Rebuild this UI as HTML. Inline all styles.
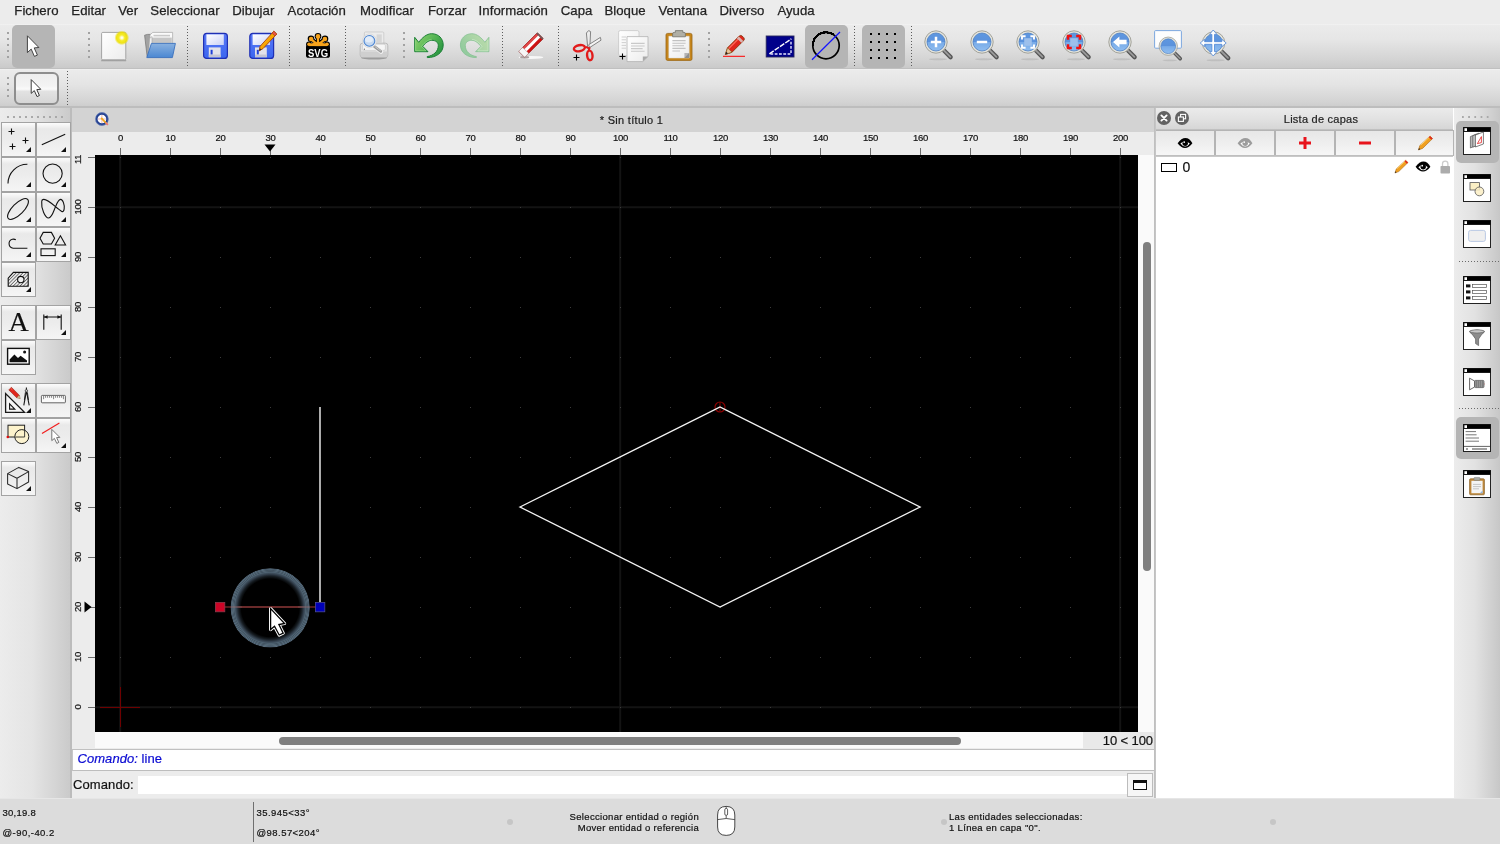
<!DOCTYPE html>
<html><head><meta charset="utf-8">
<style>
*{box-sizing:border-box;margin:0;padding:0}
html,body{width:1500px;height:844px;overflow:hidden;background:#ececec;font-family:"Liberation Sans",sans-serif;color:#1d1d1d;-webkit-text-stroke:0.2px}
.a{position:absolute}
svg{position:absolute;overflow:visible}
#menubar{left:0;top:0;width:1500px;height:24px;background:#ececec}
#menubar span{position:absolute;top:2px;font-size:13.2px;line-height:18px;color:#232323;white-space:nowrap;letter-spacing:0.04px;-webkit-text-stroke:0.25px #232323}
#tb1{left:0;top:24px;width:1500px;height:45px;background:linear-gradient(#f3f3f3 0,#ebebeb 1.5px,#e6e6e6 35%,#d4d4d4 80%,#cacaca 100%);border-bottom:1px solid #c0c0c0}
#tb2{left:0;top:69px;width:1500px;height:39px;background:linear-gradient(#f2f2f2 0,#ebebeb 1.5px,#e4e4e4 40%,#d3d3d3 85%,#cbcbcb 100%)}
#tb2b{left:0;top:104px;width:1500px;height:4px;background:linear-gradient(#cfcfcf,#b9b9b9 50%,#bdbdbd)}
.sep{position:absolute;top:2px;height:40px;width:1px;background-image:linear-gradient(#5c5c5c 1px,transparent 1px);background-size:1px 3px}
.grip{position:absolute;width:2px;background-image:linear-gradient(#a2a2a2 2px,transparent 2px);background-size:2px 6px}
.act{position:absolute;background:#b5b5b5;border-radius:5px}
#left{left:0;top:108px;width:72px;height:690px;background:linear-gradient(90deg,#ececec 0%,#e4e4e4 45%,#c9c9c9 100%)}
#tabbar{left:72px;top:108px;width:1083px;height:24px;background:#d3d3d3}
#hr{left:72px;top:132px;width:1083px;height:23px;background:#ececec;overflow:hidden}
#vr{left:72px;top:155px;width:23px;height:593px;background:#ececec;overflow:hidden}
#cv{left:95px;top:155px;width:1043px;height:577px;background:#000;overflow:hidden}
#vs{left:1138px;top:155px;width:17px;height:577px;background:#fafafa}
#hs{left:95px;top:732px;width:1060px;height:16px;background:#fafafa}
#status{left:0;top:798px;width:1500px;height:46px;background:#dcdcdc}
#right{left:1155px;top:108px;width:299px;height:690px;background:#fff}
#rtb{left:1454px;top:108px;width:46px;height:690px;background:linear-gradient(90deg,#ececec 0%,#e2e2e2 45%,#c7c7c7 100%)}
.rl{position:absolute;font-size:9.5px;letter-spacing:-0.35px;color:#111;line-height:10px;white-space:nowrap}
.cb{position:absolute;width:35px;height:35px;border:1px solid #a3a3a3;background:linear-gradient(#fbfbfb 0,#f6f6f6 6%,#e9e9e9 18%,#ececec 50%,#f5f5f5 100%)}
.cb:after{content:"";position:absolute;right:4.2px;bottom:4.2px;border-left:5px solid transparent;border-bottom:5px solid #111}
.cb.n:after{display:none}
.st{position:absolute;font-size:9.5px;line-height:11px;color:#111;white-space:nowrap;letter-spacing:0.25px}
</style></head><body><div id="root" style="position:absolute;left:0;top:0;width:1500px;height:844px;will-change:transform">
<div id="menubar" class="a">
<span style="left:14.3px">Fichero</span><span style="left:71.3px">Editar</span><span style="left:118.2px">Ver</span><span style="left:150.3px">Seleccionar</span><span style="left:232.3px">Dibujar</span><span style="left:287.6px">Acotación</span><span style="left:360px">Modificar</span><span style="left:428px">Forzar</span><span style="left:478.6px">Información</span><span style="left:560.8px">Capa</span><span style="left:604.4px">Bloque</span><span style="left:658.4px">Ventana</span><span style="left:719.5px">Diverso</span><span style="left:777.4px">Ayuda</span>
</div>
<div id="tb1" class="a">
<div class="act" style="left:12px;top:1px;width:43px;height:43px"></div>
<div class="act" style="left:805px;top:1px;width:43px;height:43px"></div>
<div class="act" style="left:862px;top:1px;width:43px;height:43px"></div>
<div class="grip" style="left:7px;top:8px;height:26px"></div>
<div class="grip" style="left:88px;top:8px;height:26px"></div>
<div class="grip" style="left:403px;top:8px;height:26px"></div>
<div class="grip" style="left:708px;top:8px;height:26px"></div>
<div class="sep" style="left:187px"></div><div class="sep" style="left:289px"></div><div class="sep" style="left:345px"></div>
<div class="sep" style="left:502px"></div><div class="sep" style="left:558px"></div><div class="sep" style="left:854px"></div><div class="sep" style="left:911px"></div>
<svg style="left:0;top:0" width="1500" height="45" viewBox="0 24 1500 45">
<defs>
<linearGradient id="gPage" x1="0" y1="0" x2="1" y2="1"><stop offset="0" stop-color="#ffffff"/><stop offset="1" stop-color="#ececec"/></linearGradient>
<radialGradient id="gGlow"><stop offset="0" stop-color="#ffffff"/><stop offset="0.12" stop-color="#fffde0"/><stop offset="0.4" stop-color="#f6ec28"/><stop offset="0.72" stop-color="#eee000" stop-opacity="0.9"/><stop offset="1" stop-color="#e8dc00" stop-opacity="0"/></radialGradient>
<linearGradient id="gFold" x1="0" y1="0" x2="0" y2="1"><stop offset="0" stop-color="#8ab2e0"/><stop offset="1" stop-color="#4b87d2"/></linearGradient>
<linearGradient id="gDisk" x1="0" y1="0" x2="0" y2="1"><stop offset="0" stop-color="#5a78f5"/><stop offset="1" stop-color="#3b66f0"/></linearGradient>
<linearGradient id="gLbl" x1="0" y1="0" x2="1" y2="1"><stop offset="0" stop-color="#ffffff"/><stop offset="0.5" stop-color="#e6e9fb"/><stop offset="1" stop-color="#c9d0f4"/></linearGradient>
<linearGradient id="gPen" x1="0" y1="0" x2="1" y2="1"><stop offset="0" stop-color="#ffd84a"/><stop offset="0.5" stop-color="#f7a400"/><stop offset="1" stop-color="#e07800"/></linearGradient>
<linearGradient id="gUndo" x1="0" y1="0.2" x2="1" y2="0.8"><stop offset="0" stop-color="#8ad06c"/><stop offset="0.5" stop-color="#55b554"/><stop offset="1" stop-color="#23913e"/></linearGradient>
<linearGradient id="gRedo" x1="0" y1="0.2" x2="1" y2="0.8"><stop offset="0" stop-color="#bcdcac"/><stop offset="0.5" stop-color="#a6d3a4"/><stop offset="1" stop-color="#8cc89c"/></linearGradient>
<linearGradient id="gLens" x1="0" y1="0" x2="0" y2="1"><stop offset="0" stop-color="#5e97e0"/><stop offset="0.5" stop-color="#5b92dc"/><stop offset="0.52" stop-color="#78abe8"/><stop offset="1" stop-color="#8fbdf0"/></linearGradient>
<g id="disk"><rect x="0.6" y="0.6" width="23.8" height="25" rx="3" fill="url(#gDisk)" stroke="#2030b4" stroke-width="1.2"/><rect x="3.4" y="1.6" width="17.4" height="10.6" fill="url(#gLbl)"/><rect x="5.8" y="14.6" width="11.8" height="9.8" fill="#e2e2ea"/><rect x="5.8" y="21.8" width="11.8" height="2.6" fill="#c4c4d2"/><rect x="7.6" y="17" width="2" height="4.6" fill="#2040d8"/></g>
<g id="mag"><path d="M19.5 20L26.6 27.1" stroke="#565656" stroke-width="4.4" stroke-linecap="round"/><path d="M20 20.5L26.4 26.9" stroke="#9a9a9a" stroke-width="1.8" stroke-linecap="round"/><ellipse cx="14" cy="29.2" rx="9" ry="1" fill="#9a9a9a" opacity="0.35"/><circle cx="12" cy="12" r="11.2" fill="#e4e4dc" stroke="#9b9b93" stroke-width="0.9"/><circle cx="12" cy="12" r="9" fill="url(#gLens)" stroke="#4d7fc4" stroke-width="0.8"/></g>
</defs>
<!-- pointer -->
<path d="M27.4 35.8V52.6L31.2 49.1L34.4 56.4L37.4 55.1L34.2 47.9L38.9 47.5Z" fill="#fff" stroke="#444" stroke-width="1" stroke-linejoin="round"/>
<!-- new -->
<path d="M101.2 60.6H126.2" stroke="#8f8f8f" stroke-width="1.4" opacity="0.7"/>
<rect x="101.6" y="32.4" width="24.2" height="27.4" rx="1.2" fill="url(#gPage)" stroke="#9c9c9c" stroke-width="0.9"/>
<circle cx="121.8" cy="37.8" r="7.4" fill="url(#gGlow)"/>
<!-- open -->
<path d="M144.6 35.2L147.6 34.4H151L152 36H171.5V56.8H147.2Z" fill="#a2a2a2" stroke="#7a7a7a" stroke-width="0.8"/>
<path d="M150 34.8L152.8 32.4H172.6V47H150Z" fill="#fafafa" stroke="#a6a6a6" stroke-width="0.7"/>
<path d="M153.5 35.6H170" stroke="#c9c9c9" stroke-width="1.6"/><rect x="151" y="37.6" width="20.8" height="6" fill="#c6c6c6"/>
<path d="M148.4 56.5L149.6 38.5L152 36.5V44Z" fill="#f0f0f0" stroke="#999" stroke-width="0.5"/>
<path d="M151.4 43.4H175.4L172.4 57.6H146.8Z" fill="url(#gFold)" stroke="#3a70bd" stroke-width="0.9" stroke-linejoin="round"/>
<!-- save / save as -->
<use href="#disk" x="203" y="32.8"/>
<use href="#disk" x="249.2" y="32.8"/>
<path d="M273.8 31.2L276.8 34L263 48.6L259.2 50.9L260 46.4Z" fill="url(#gPen)" stroke="#a8420a" stroke-width="0.9" stroke-linejoin="round"/>
<path d="M272 33.2L273.8 31.2L276.8 34L275 36Z" fill="#e8554a" stroke="#a8420a" stroke-width="0.6"/>
<path d="M259.2 50.9L259.8 48.2L261.6 49.6Z" fill="#333"/>
<!-- svg -->
<g stroke="#000" stroke-width="4" stroke-linecap="round"><path d="M318 44V36.5M318 44L311.2 39M318 44L324.8 39M318 44L309.4 44.4M318 44L326.6 44.4"/></g>
<g fill="#000"><circle cx="318" cy="36.3" r="3.3"/><circle cx="311" cy="38.8" r="3.3"/><circle cx="325" cy="38.8" r="3.3"/><circle cx="308.9" cy="44.3" r="2.8"/><circle cx="327.1" cy="44.3" r="2.8"/></g>
<rect x="306" y="44.6" width="24" height="13.2" rx="2.6" fill="#000"/>
<g stroke="#f7a31c" stroke-width="2.3" stroke-linecap="round"><path d="M318 45V37M318 45L311.6 39.6M318 45L324.4 39.6M318 45.2L309.8 44.6M318 45.2L326.2 44.6"/></g>
<g fill="#f7a31c"><circle cx="318" cy="36.4" r="2.3"/><circle cx="311.1" cy="39" r="2.3"/><circle cx="324.9" cy="39" r="2.3"/><circle cx="309" cy="44.3" r="1.8"/><circle cx="327" cy="44.3" r="1.8"/><path d="M309 44.2Q318 41 327 44.2V46.2H309Z"/></g>
<rect x="306.4" y="46.4" width="23.2" height="1" fill="#000"/>
<text x="318" y="56.6" font-family="Liberation Sans" font-weight="bold" font-size="10.2" text-anchor="middle" fill="#fff" textLength="20" lengthAdjust="spacingAndGlyphs">SVG</text>
<!-- print preview -->
<ellipse cx="374" cy="57.8" rx="13" ry="1.8" fill="#6e6e6e" opacity="0.55"/>
<rect x="364.4" y="32" width="19.4" height="12.6" rx="1" fill="#ececec" stroke="#c4c4c4" stroke-width="0.7"/>
<rect x="376.6" y="34.4" width="5.2" height="8" fill="#d6d6d6"/>
<rect x="360.2" y="43.2" width="27.6" height="14.2" rx="2.4" fill="#e3e3e3" stroke="#b0b0b0" stroke-width="0.8"/>
<path d="M360.6 51.4H387.4V55Q387.4 57 385.4 57H362.6Q360.6 57 360.6 55Z" fill="#cfcfcf"/>
<path d="M362.6 45.4Q362.6 44.2 364 44.2H384Q385.4 44.2 385.4 45.4V49Q385.4 50.4 384 50.4H364Q362.6 50.4 362.6 49Z" fill="#f6f6f6" stroke="#c6c6c6" stroke-width="0.6"/>
<circle cx="364.4" cy="49.2" r="0.6" fill="#666"/>
<path d="M373.8 46L381 51.6" stroke="#f2f2f2" stroke-width="4.4" stroke-linecap="round"/>
<path d="M374.2 46.4L380.8 51.4" stroke="#9c9c9c" stroke-width="2.6" stroke-linecap="round"/>
<path d="M375 46.6L380.6 50.8" stroke="#c9c9c9" stroke-width="1" stroke-linecap="round"/>
<circle cx="369.4" cy="40.9" r="7" fill="#efefef" stroke="#c9c9c9" stroke-width="0.5"/>
<circle cx="369.4" cy="40.9" r="5.4" fill="#c4d8f0" stroke="#4d86d2" stroke-width="1.1"/>
<ellipse cx="369" cy="39.6" rx="4" ry="3" fill="#e8f0fa" opacity="0.85"/>
</svg>
<svg style="left:0;top:0" width="1500" height="45" viewBox="0 24 1500 45">
<!-- undo -->
<path d="M414.7 37.3L418.7 42.3C422 38 426.5 33.7 431.7 33.7C438.5 33.7 443.2 38.6 443.2 45C443.2 52.5 436.5 57.6 427.3 57.6L427.2 56.6C433.5 55.6 438.3 51.5 438.3 45.6C438.3 42.2 435.5 40.3 431.7 40.3C428.4 40.3 425 43.4 422.7 46.3L428 51.7H414.7Z" fill="url(#gUndo)" stroke="#1c8036" stroke-width="1" stroke-linejoin="round"/>
<path d="M415.6 39.8V50.8H425.8L421.6 46.4C424.4 42.6 428 39.4 431.7 39.4" fill="none" stroke="#a4e494" stroke-width="0.7" opacity="0.8"/>
<!-- redo -->
<g transform="translate(903.6,0) scale(-1,1)"><path d="M414.7 37.3L418.7 42.3C422 38 426.5 33.7 431.7 33.7C438.5 33.7 443.2 38.6 443.2 45C443.2 52.5 436.5 57.6 427.3 57.6L427.2 56.6C433.5 55.6 438.3 51.5 438.3 45.6C438.3 42.2 435.5 40.3 431.7 40.3C428.4 40.3 425 43.4 422.7 46.3L428 51.7H414.7Z" fill="url(#gRedo)" stroke="#84c092" stroke-width="0.8" stroke-linejoin="round"/>
<path d="M415.6 39.8V50.8H425.8L421.6 46.4C424.4 42.6 428 39.4 431.7 39.4" fill="none" stroke="#d4efd2" stroke-width="0.7" opacity="0.8"/></g>
<!-- eraser -->
<ellipse cx="531" cy="57.4" rx="12.4" ry="1.5" fill="#fff" opacity="0.8"/>
<ellipse cx="524.6" cy="57.2" rx="4.6" ry="1.2" fill="#8a7a7a" opacity="0.7"/>
<g transform="rotate(-45 531 45)">
<rect x="517.8" y="40.8" width="26.4" height="8.4" rx="0.8" fill="#cf1212" stroke="#981010" stroke-width="0.6"/>
<rect x="523.2" y="41.1" width="19.6" height="2" fill="#e04a4a"/>
<rect x="523.2" y="43.3" width="20.6" height="3" fill="#fff"/>
<rect x="517.8" y="40.8" width="5.6" height="8.4" rx="0.7" fill="#f6f6f6" stroke="#b4b4b4" stroke-width="0.5"/>
<rect x="542.8" y="40.8" width="1.6" height="8.4" fill="#6e5c5c"/>
</g>
<!-- cut -->
<path d="M587.8 48.4L586.4 33L588.6 30.6L590.6 31.6L589.8 47.6Z" fill="#ececec" stroke="#6a6a6a" stroke-width="0.8" stroke-linejoin="round"/>
<path d="M588.6 44.8L600.4 37.4L601 40.2L589.6 47.6Z" fill="#f4f4f4" stroke="#6a6a6a" stroke-width="0.8" stroke-linejoin="round"/>
<ellipse cx="579.4" cy="48.2" rx="5.6" ry="3" transform="rotate(-12 579.4 48.2)" fill="none" stroke="#e21b1b" stroke-width="2.4"/>
<ellipse cx="589.8" cy="55.4" rx="2.7" ry="4.8" transform="rotate(-6 589.8 55.4)" fill="none" stroke="#e21b1b" stroke-width="2.4"/>
<path d="M585.6 46.8L589.4 48.4L588.6 50.8" fill="none" stroke="#e21b1b" stroke-width="2"/>
<path d="M573.5 57.5H579.5M576.5 54.5V60.5" stroke="#000" stroke-width="1.1"/>
<!-- copy -->
<rect x="618.6" y="30.6" width="20.4" height="25" rx="1.6" fill="url(#gPage)" stroke="#c2c2c2" stroke-width="0.7"/>
<path d="M621.6 37H626M621.6 39.8H626M621.6 42.6H626M621.6 45.4H626M621.6 48.2H626" stroke="#cfcfcf" stroke-width="1"/>
<path d="M627 36.6H648V56.6L642.8 61.6H627Z" fill="url(#gPage)" stroke="#b2b2b2" stroke-width="0.8" stroke-linejoin="round"/>
<path d="M642.8 61.6V56.6H648Z" fill="#a9a9a9"/>
<path d="M631 43.4H644.6M631 46H644.6M631 48.6H642.6M631 51.2H644.6" stroke="#c9c9c9" stroke-width="1.1"/>
<path d="M619.5 56.5H625.5M622.5 53.5V59.5" stroke="#000" stroke-width="1.1"/>
<!-- paste -->
<rect x="666" y="33.4" width="26" height="27" rx="1.6" fill="#c6861c" stroke="#9a6614" stroke-width="0.8"/>
<path d="M668.8 36.2H689.2V58H668.8Z" fill="url(#gPage)" stroke="#d9d9d9" stroke-width="0.5"/>
<path d="M684.4 58L689.2 58V53H684.4Z" fill="#b4b4b4"/><path d="M684.4 58L689.2 53V58Z" fill="#8e8e8e"/>
<path d="M672.4 40.6H685.6M672.4 43.2H685.6M672.4 45.8H684M672.4 48.4H685.6M672.4 51H680" stroke="#c2c2c2" stroke-width="1.1"/>
<path d="M672.6 33.8Q672.6 32.4 674.2 32.4H675.4V30.6H682.8V32.4H684Q685.4 32.4 685.4 33.8V36.8H672.6Z" fill="#b0afa5" stroke="#74746c" stroke-width="0.8"/>
<!-- pencil w/ line -->
<path d="M723 56.3H745" stroke="#f00" stroke-width="1"/>
<g transform="translate(0.4,-0.6) rotate(-45 734 46) translate(734 46) scale(1.12) translate(-734 -46)">
<path d="M722.6 46L728.2 43.2H742.6Q744.8 43.2 744.8 45V47Q744.8 48.8 742.6 48.8H728.2Z" fill="#e0261c" stroke="#8a3a12" stroke-width="0.8" stroke-linejoin="round"/>
<path d="M728.2 44.4H741" stroke="#ff6a5a" stroke-width="1.1"/>
<rect x="740" y="43.2" width="2.4" height="5.6" fill="#d9b4b0"/>
<path d="M722.6 46L728.2 43.2V48.8Z" fill="#e8c49a" stroke="#8a5a22" stroke-width="0.6"/>
<path d="M722.6 46L724.8 44.9V47.1Z" fill="#222"/>
</g>
<!-- blue rect -->
<rect x="766.2" y="36" width="27.8" height="21" fill="#00008a" stroke="#26265c" stroke-width="0.9"/>
<path d="M769.4 53.8L791.4 38.8" stroke="#fff" stroke-width="1.4" stroke-dasharray="5.2 1.2"/>
<path d="M770.4 54H791V40.4" fill="none" stroke="#e4e4ff" stroke-width="1.4" stroke-dasharray="2.8 1.5"/>
<!-- circle/line -->
<circle cx="826" cy="45.6" r="13.2" fill="none" stroke="#000" stroke-width="1.7"/>
<path d="M812.8 45.6A13.2 13.2 0 0 1 833 34.4" fill="none" stroke="#000" stroke-width="2.2" shape-rendering="crispEdges"/>
<path d="M812 59.8L840 32" stroke="#1414ff" stroke-width="1.2"/>
<!-- grid -->
<g fill="#000"><rect x="870" y="33" width="2" height="2"/><rect x="878" y="33" width="2" height="2"/><rect x="886" y="33" width="2" height="2"/><rect x="894" y="33" width="2" height="2"/>
<rect x="870" y="41" width="2" height="2"/><rect x="878" y="41" width="2" height="2"/><rect x="886" y="41" width="2" height="2"/><rect x="894" y="41" width="2" height="2"/>
<rect x="870" y="49" width="2" height="2"/><rect x="878" y="49" width="2" height="2"/><rect x="886" y="49" width="2" height="2"/><rect x="894" y="49" width="2" height="2"/>
<rect x="870" y="57" width="2" height="2"/><rect x="878" y="57" width="2" height="2"/><rect x="886" y="57" width="2" height="2"/><rect x="894" y="57" width="2" height="2"/></g>
<!-- zooms -->
<use href="#mag" x="924" y="30"/>
<path d="M930.8 42H941.2M936 36.8V47.2" stroke="#fff" stroke-width="2.5"/>
<use href="#mag" x="970" y="30"/>
<path d="M976.8 42H987.2" stroke="#fff" stroke-width="2.5"/>
<use href="#mag" x="1016" y="30"/>
<rect x="1024.2" y="38.2" width="7.6" height="7.6" fill="#9dc0ec"/>
<path d="M1022 39.6V36.2H1025.6M1030.4 36.2H1034V39.6M1034 44.4V47.8H1030.4M1025.6 47.8H1022V44.4" fill="none" stroke="#fff" stroke-width="1.9"/>
<use href="#mag" x="1062" y="30"/>
<rect x="1070.2" y="38.2" width="7.6" height="7.6" fill="#9dc0ec"/>
<path d="M1068 39.8V36H1071.8M1076.2 36H1080V39.8M1080 44.2V48H1076.2M1071.8 48H1068V44.2" fill="none" stroke="#f01010" stroke-width="2.5"/>
<use href="#mag" x="1108" y="30"/>
<path d="M1113 42L1119.4 36.6V39.8H1126.6V44.2H1119.4V47.4Z" fill="#fff"/>
<!-- zoom window -->
<rect x="1154.6" y="30.6" width="26.8" height="17.6" rx="1" fill="#fdfdfd" stroke="#6f9fdc" stroke-width="0.9"/>
<g transform="translate(1158.4 36.4) scale(0.82)"><use href="#mag"/></g>
<!-- pan -->
<use href="#mag" x="1201.6" y="31"/>
<path d="M1213.2 30.0L1216.9 34.4L1214.5 34.4L1214.5 41.7L1221.8 41.7L1221.8 39.3L1226.2 43.0L1221.8 46.7L1221.8 44.3L1214.5 44.3L1214.5 51.6L1216.9 51.6L1213.2 56.0L1209.5 51.6L1211.9 51.6L1211.9 44.3L1204.6 44.3L1204.6 46.7L1200.2 43.0L1204.6 39.3L1204.6 41.7L1211.9 41.7L1211.9 34.4L1209.5 34.4Z" fill="#fff" stroke="#4f86d6" stroke-width="0.8" stroke-linejoin="round"/>
</svg>
</div>
<div id="tb2" class="a">
<div class="grip" style="left:7px;top:8px;height:20px"></div>
<div class="a" style="left:14px;top:3px;width:45px;height:33px;border:2px solid #8e8e8e;border-radius:6px;background:linear-gradient(#ededed 0%,#f3f3f3 40%,#fafafa 52%,#e2e2e2 60%,#d6d6d6 100%)"></div>
<div class="sep" style="left:67px;top:2px;height:34px"></div>
<svg style="left:0;top:0" width="100" height="39" viewBox="0 69 100 39">
<path d="M31.2 79.6V93.4L34.3 90.6L37 96.6L39.4 95.5L36.8 89.6L40.8 89.3Z" fill="#fff" stroke="#3a3a3a" stroke-width="1" stroke-linejoin="round"/>
</svg>
</div>
<div id="tb2b" class="a" style="top:106px;height:2px;background:#bdbdbd"></div>
<div id="left" class="a">
<div class="a" style="left:70px;top:0;width:2px;height:690px;background:#bcbcbc"></div>
<div class="a" style="left:7px;top:8px;width:58px;height:2px;background-image:linear-gradient(90deg,#a9a9a9 2px,transparent 2px);background-size:6px 2px"></div>
<div class="cb" style="left:1px;top:14px"></div><div class="cb" style="left:36px;top:14px"></div>
<div class="cb" style="left:1px;top:49px"></div><div class="cb" style="left:36px;top:49px"></div>
<div class="cb" style="left:1px;top:84px"></div><div class="cb" style="left:36px;top:84px"></div>
<div class="cb" style="left:1px;top:119px"></div><div class="cb" style="left:36px;top:119px"></div>
<div class="cb" style="left:1px;top:154px"></div>
<div class="cb n" style="left:1px;top:197px"></div><div class="cb" style="left:36px;top:197px"></div>
<div class="cb n" style="left:1px;top:232px"></div>
<div class="cb" style="left:1px;top:275px"></div><div class="cb n" style="left:36px;top:275px"></div>
<div class="cb n" style="left:1px;top:310px"></div><div class="cb" style="left:36px;top:310px"></div>
<div class="cb" style="left:1px;top:353px"></div>
<svg style="left:0;top:0" width="72" height="690" viewBox="0 108 72 690" fill="none" stroke="#111" stroke-width="1.1">
<defs><pattern id="hat" width="2.4" height="2.4" patternUnits="userSpaceOnUse" patternTransform="rotate(-45)"><rect width="2.4" height="0.65" fill="#444" stroke="none"/></pattern></defs>
<!-- points -->
<path d="M8.5 131.5H14.5M11.5 128.5V134.5M22.5 140.5H28.5M25.5 137.5V143.5M9.5 146.5H15.5M12.5 143.5V149.5"/>
<!-- line -->
<path d="M41.8 144.8L65.2 134.2"/>
<!-- arc -->
<path d="M8 183.4A19.4 19.4 0 0 1 27.4 164.2"/>
<!-- circle -->
<circle cx="52.6" cy="173.6" r="9.6"/>
<!-- ellipse -->
<ellipse cx="18" cy="209" rx="13.6" ry="5.6" transform="rotate(-45 18 209)"/>
<!-- spline -->
<path d="M41.7 201.4C41 208 45 218 48.6 218C52 218 54 210 55.6 206.6C57 203 58.6 199.4 60.6 199.4C63 199.4 64.6 205 64.2 208.6C64 211 63 212 61.8 211.4C57 209 48 198.4 43.4 199.4C42.2 199.6 41.8 200.2 41.7 201.4Z"/>
<!-- arc+line -->
<path d="M27.4 248.2H13.2A4.6 4.6 0 0 1 12.4 239.2Q14.4 238.8 15.8 239.8"/>
<!-- shapes -->
<path d="M43.2 232.4H51.4L54.6 238.2L51.4 244H43.2L40 238.2Z"/>
<path d="M60.4 235.8L65.6 245H55.2Z"/>
<rect x="41" y="248.8" width="14.2" height="6.8"/>
<!-- hatch -->
<path d="M13.4 272.4H28.2V286.2H8.2V278.2Z" fill="url(#hat)"/>
<circle cx="20.8" cy="279.6" r="3.2" fill="#f0f0f0"/>
<!-- dimension -->
<path d="M43.8 314.6V329.8M61.2 314.6V329.8M43.8 317H61.2"/>
<path d="M43.8 317L47.6 315.2V318.8ZM61.2 317L57.4 315.2V318.8Z" fill="#111" stroke="none"/>
<g transform="translate(0,-1)"><!-- image -->
<rect x="7.6" y="349.4" width="21.6" height="15.8" fill="#fff" stroke="#111" stroke-width="1.4"/>
<path d="M9.6 363.2V360.4L14.4 355.6L18 359L20.6 356.8L27 361.6V363.2Z" fill="#111" stroke="none"/>
<circle cx="24.6" cy="353" r="1.5" fill="#111" stroke="none"/>
<!-- drafting -->
<path d="M5.6 394.5V413.4H24.5Z" fill="#f6f6f6" stroke="#1a1a1a" stroke-width="1.3"/>
<path d="M9.6 404.9V410.1H14.8Z" stroke-width="1.1"/>
<path d="M11.4 388.3L8.8 390.9L16.7 398.8L19.3 396.2Z" fill="#e0261c" stroke="#96281a" stroke-width="0.6"/>
<path d="M19.3 396.2L16.7 398.8L20.3 399.7Z" fill="#e8c49a" stroke="#6a4a22" stroke-width="0.4"/>
<path d="M10.6 389.2L12.4 390.8" stroke="#ff7a6a" stroke-width="0.8"/>
<path d="M26.4 388.4V392L23.8 406.4M26.4 392L29.2 406.4" stroke="#1a1a1a" stroke-width="1.1"/>
<path d="M25.4 393.4L24.4 401M27.4 393.4L28.4 401" stroke="#1a1a1a" stroke-width="0.9"/>
<circle cx="26.4" cy="391.8" r="1.2" fill="#ddd" stroke="#1a1a1a" stroke-width="0.7"/>
<!-- ruler -->
<rect x="41.4" y="396.4" width="24" height="7.4" rx="0.8" fill="#fafafa" stroke="#555" stroke-width="0.9"/>
<path d="M43.6 397V400.2M45.6 397V398.8M47.6 397V398.8M49.6 397V398.8M51.6 397V398.8M53.6 397V400.2M55.6 397V398.8M57.6 397V398.8M59.6 397V398.8M61.6 397V398.8M63.4 397V400.2" stroke="#555" stroke-width="0.7"/>
<!-- rect+circle -->
<rect x="8" y="426.2" width="16.6" height="11.8" fill="#fdf3cc" stroke="#222" stroke-width="1"/>
<circle cx="21.8" cy="437.6" r="7" fill="#fdf3cc" fill-opacity="0.9" stroke="#222" stroke-width="1"/>
<path d="M15.4 438H24.6V430.8" stroke="#222" stroke-width="0.8"/>
<circle cx="7.8" cy="438" r="1.3" fill="#e01010" stroke="none"/>
<!-- red line + cursor -->
<path d="M42 434.4L59.4 424" stroke="#f21d1d" stroke-width="1.2"/>
<path d="M51.8 430.4V441.6L54.4 439.4L56.8 444.4L58.8 443.4L56.6 438.6L59.8 438.4Z" fill="#fff" stroke="#555" stroke-width="0.8" stroke-linejoin="round"/>
</g><!-- 3d -->
<path d="M7.6 473.6L18.8 467.4L28.6 471.6V482L17 488.6L7.6 484ZM7.6 473.6L17 478.2L28.6 471.6M17 478.2V488.6" stroke="#2a2a2a" stroke-width="1.05" stroke-linejoin="round"/>
</svg>
<div class="a" style="left:1px;top:197px;width:35px;height:35px;font-family:'Liberation Serif',serif;font-size:28px;line-height:33px;text-align:center;color:#111">A</div>
</div>
<div id="tabbar" class="a">
<div class="a" style="left:0;top:5px;width:1083px;text-align:center;font-size:11px;line-height:14px;color:#1a1a1a;padding-left:36px;letter-spacing:0.3px">* Sin título 1</div>
<svg style="left:23px;top:4px" width="16" height="16" viewBox="0 0 16 16">
<circle cx="6.9" cy="7" r="5.5" fill="#fdfdfd" stroke="#24408f" stroke-width="2.3"/>
<circle cx="6.9" cy="7" r="6.4" fill="none" stroke="#8a9fd0" stroke-width="0.5"/>
<path d="M6.9 3V11M3 7H10.8" stroke="#e69a9a" stroke-width="0.7"/>
<path d="M6.6 6.4L12 12" stroke="#f0a81c" stroke-width="1.8" stroke-linecap="round"/>
<path d="M11.2 11.2L12.4 12.4" stroke="#e87a7a" stroke-width="1.8" stroke-linecap="round"/>
</svg>
</div>
<div class="a" style="left:94px;top:154px;width:1059px;height:1px;background:#fbfbfb"></div>
<div class="a" style="left:94px;top:154px;width:1px;height:578px;background:#fbfbfb"></div>
<div id="hr" class="a"><i class="a" style="left:48px;top:16px;width:1px;height:7px;background:#6b6b6b"></i><span class="rl" style="left:28px;top:1px;width:41px;text-align:center">0</span><i class="a" style="left:98px;top:16px;width:1px;height:7px;background:#6b6b6b"></i><span class="rl" style="left:78px;top:1px;width:41px;text-align:center">10</span><i class="a" style="left:148px;top:16px;width:1px;height:7px;background:#6b6b6b"></i><span class="rl" style="left:128px;top:1px;width:41px;text-align:center">20</span><i class="a" style="left:198px;top:16px;width:1px;height:7px;background:#6b6b6b"></i><span class="rl" style="left:178px;top:1px;width:41px;text-align:center">30</span><i class="a" style="left:248px;top:16px;width:1px;height:7px;background:#6b6b6b"></i><span class="rl" style="left:228px;top:1px;width:41px;text-align:center">40</span><i class="a" style="left:298px;top:16px;width:1px;height:7px;background:#6b6b6b"></i><span class="rl" style="left:278px;top:1px;width:41px;text-align:center">50</span><i class="a" style="left:348px;top:16px;width:1px;height:7px;background:#6b6b6b"></i><span class="rl" style="left:328px;top:1px;width:41px;text-align:center">60</span><i class="a" style="left:398px;top:16px;width:1px;height:7px;background:#6b6b6b"></i><span class="rl" style="left:378px;top:1px;width:41px;text-align:center">70</span><i class="a" style="left:448px;top:16px;width:1px;height:7px;background:#6b6b6b"></i><span class="rl" style="left:428px;top:1px;width:41px;text-align:center">80</span><i class="a" style="left:498px;top:16px;width:1px;height:7px;background:#6b6b6b"></i><span class="rl" style="left:478px;top:1px;width:41px;text-align:center">90</span><i class="a" style="left:548px;top:16px;width:1px;height:7px;background:#6b6b6b"></i><span class="rl" style="left:528px;top:1px;width:41px;text-align:center">100</span><i class="a" style="left:598px;top:16px;width:1px;height:7px;background:#6b6b6b"></i><span class="rl" style="left:578px;top:1px;width:41px;text-align:center">110</span><i class="a" style="left:648px;top:16px;width:1px;height:7px;background:#6b6b6b"></i><span class="rl" style="left:628px;top:1px;width:41px;text-align:center">120</span><i class="a" style="left:698px;top:16px;width:1px;height:7px;background:#6b6b6b"></i><span class="rl" style="left:678px;top:1px;width:41px;text-align:center">130</span><i class="a" style="left:748px;top:16px;width:1px;height:7px;background:#6b6b6b"></i><span class="rl" style="left:728px;top:1px;width:41px;text-align:center">140</span><i class="a" style="left:798px;top:16px;width:1px;height:7px;background:#6b6b6b"></i><span class="rl" style="left:778px;top:1px;width:41px;text-align:center">150</span><i class="a" style="left:848px;top:16px;width:1px;height:7px;background:#6b6b6b"></i><span class="rl" style="left:828px;top:1px;width:41px;text-align:center">160</span><i class="a" style="left:898px;top:16px;width:1px;height:7px;background:#6b6b6b"></i><span class="rl" style="left:878px;top:1px;width:41px;text-align:center">170</span><i class="a" style="left:948px;top:16px;width:1px;height:7px;background:#6b6b6b"></i><span class="rl" style="left:928px;top:1px;width:41px;text-align:center">180</span><i class="a" style="left:998px;top:16px;width:1px;height:7px;background:#6b6b6b"></i><span class="rl" style="left:978px;top:1px;width:41px;text-align:center">190</span><i class="a" style="left:1048px;top:16px;width:1px;height:7px;background:#6b6b6b"></i><span class="rl" style="left:1028px;top:1px;width:41px;text-align:center">200</span><svg class="a" style="left:192px;top:12px" width="12" height="8"><path d="M0.5 0.5L11.5 0.5L6 7.5Z" fill="#000"/></svg></div>
<div id="vr" class="a"><i class="a" style="left:16px;top:552px;width:7px;height:1px;background:#6b6b6b"></i><span class="rl" style="left:-14.7px;top:547px;width:41px;text-align:center;transform:rotate(-90deg)">0</span><i class="a" style="left:16px;top:502px;width:7px;height:1px;background:#6b6b6b"></i><span class="rl" style="left:-14.7px;top:497px;width:41px;text-align:center;transform:rotate(-90deg)">10</span><i class="a" style="left:16px;top:452px;width:7px;height:1px;background:#6b6b6b"></i><span class="rl" style="left:-14.7px;top:447px;width:41px;text-align:center;transform:rotate(-90deg)">20</span><i class="a" style="left:16px;top:402px;width:7px;height:1px;background:#6b6b6b"></i><span class="rl" style="left:-14.7px;top:397px;width:41px;text-align:center;transform:rotate(-90deg)">30</span><i class="a" style="left:16px;top:352px;width:7px;height:1px;background:#6b6b6b"></i><span class="rl" style="left:-14.7px;top:347px;width:41px;text-align:center;transform:rotate(-90deg)">40</span><i class="a" style="left:16px;top:302px;width:7px;height:1px;background:#6b6b6b"></i><span class="rl" style="left:-14.7px;top:297px;width:41px;text-align:center;transform:rotate(-90deg)">50</span><i class="a" style="left:16px;top:252px;width:7px;height:1px;background:#6b6b6b"></i><span class="rl" style="left:-14.7px;top:247px;width:41px;text-align:center;transform:rotate(-90deg)">60</span><i class="a" style="left:16px;top:202px;width:7px;height:1px;background:#6b6b6b"></i><span class="rl" style="left:-14.7px;top:197px;width:41px;text-align:center;transform:rotate(-90deg)">70</span><i class="a" style="left:16px;top:152px;width:7px;height:1px;background:#6b6b6b"></i><span class="rl" style="left:-14.7px;top:147px;width:41px;text-align:center;transform:rotate(-90deg)">80</span><i class="a" style="left:16px;top:102px;width:7px;height:1px;background:#6b6b6b"></i><span class="rl" style="left:-14.7px;top:97px;width:41px;text-align:center;transform:rotate(-90deg)">90</span><i class="a" style="left:16px;top:52px;width:7px;height:1px;background:#6b6b6b"></i><span class="rl" style="left:-14.7px;top:47px;width:41px;text-align:center;transform:rotate(-90deg)">100</span><i class="a" style="left:16px;top:2px;width:7px;height:1px;background:#6b6b6b"></i><span class="rl" style="left:-14.7px;top:-3px;width:41px;text-align:center;transform:rotate(-90deg)">110</span><svg class="a" style="left:12px;top:446px" width="8" height="12"><path d="M0.5 0.5L0.5 11.5L7.5 6Z" fill="#000"/></svg></div>
<div id="cv" class="a"><svg class="a" style="left:0;top:0" width="1043" height="577" viewBox="95 155 1043 577">
<defs><pattern id="gd" x="120" y="207" width="50" height="50" patternUnits="userSpaceOnUse"><rect x="0" y="0" width="1" height="1" fill="#3c3c3c"/></pattern></defs>
<g stroke="#131313" stroke-width="2"><path d="M120.2 155V732M620.2 155V732M1120.2 155V732M95 207.3H1138M95 707.3H1138"/></g>
<rect x="95" y="155" width="1043" height="577" fill="url(#gd)"/>
<path d="M100 707.5H140M120.5 687V727" stroke="#6e0000" stroke-width="1" shape-rendering="crispEdges"/>
<path d="M320 407V602" stroke="#b6b6b6" stroke-width="1.9"/>
<circle cx="720" cy="407" r="5" fill="none" stroke="#8a0000" stroke-width="1.2"/>
<path d="M720 402V412" stroke="#700000" stroke-width="1.2"/>
<path d="M520 507L720 407L920 507L720 607Z" fill="none" stroke="#f4f4f4" stroke-width="1.35"/>
<defs><radialGradient id="ring" cx="270.2" cy="607.8" r="39.6" gradientUnits="userSpaceOnUse">
<stop offset="0.73" stop-color="#313f4b" stop-opacity="0"/><stop offset="0.79" stop-color="#313f4b" stop-opacity="0.4"/><stop offset="0.85" stop-color="#3c4b5b" stop-opacity="0.85"/>
<stop offset="0.88" stop-color="#415260"/><stop offset="0.90" stop-color="#4f6373"/><stop offset="0.915" stop-color="#3f505e"/><stop offset="0.93" stop-color="#546877"/><stop offset="0.945" stop-color="#415260"/><stop offset="0.96" stop-color="#576c7b"/><stop offset="0.975" stop-color="#445768"/><stop offset="0.99" stop-color="#5b6f7f"/><stop offset="1" stop-color="#5b6f7f" stop-opacity="0.55"/></radialGradient></defs>
<path d="M220 607H320" stroke="#6a2626" stroke-width="1.3"/>
<circle cx="270.2" cy="607.8" r="39.6" fill="url(#ring)"/>
<path d="M231 607H309" stroke="#a87070" stroke-width="1.4" opacity="0.45"/>
<path d="M242 607H298" stroke="#6a2626" stroke-width="1.3"/>
<rect x="215.4" y="602.4" width="9.4" height="9.4" fill="#cc0426" stroke="#8c3a4a" stroke-width="0.8"/>
<rect x="315.4" y="602.4" width="9.4" height="9.4" fill="#0000b8" stroke="#4a4a96" stroke-width="0.8"/>
<path id="cur" d="M270.6 608.6V629.6L274.5 626.2L279.2 635L283.2 633.1L278.9 624.5L284.6 623.5Z" fill="#fff" stroke="#fff" stroke-width="3.2" stroke-linejoin="round"/>
<path d="M270.6 608.6V629.6L274.5 626.2L279.2 635L283.2 633.1L278.9 624.5L284.6 623.5Z" fill="#fff" stroke="#000" stroke-width="1.3" stroke-linejoin="miter"/>
</svg></div>
<div id="vs" class="a" style="width:16px"><div class="a" style="left:5px;top:87px;width:8px;height:329px;border-radius:4px;background:#7f7f7f"></div></div>
<div class="a" style="left:1154px;top:108px;width:2px;height:690px;background:linear-gradient(90deg,#bdbdbd,#c8c8c8);z-index:5"></div>
<div class="a" style="left:72px;top:732px;width:23px;height:16px;background:#ececec"></div>
<div id="hs" class="a" style="width:1059px"><div class="a" style="left:183.5px;top:5px;width:682px;height:8px;border-radius:4px;background:#7f7f7f"></div>
<div class="a" style="left:988px;top:0;width:71px;height:16.5px;background:#e9e9e9;text-align:right;font-size:13px;line-height:17.6px;color:#111;padding-right:1px;letter-spacing:-0.1px">10 &lt; 100</div></div>
<div class="a" style="left:72px;top:748.5px;width:1082px;height:1.3px;background:#c0c0c0"></div>
<div class="a" style="left:72px;top:749.6px;width:1082px;height:21.4px;background:#fff;border-left:1px solid #c8c8c8;border-bottom:1px solid #bdbdbd;font-size:13px;line-height:17px;color:#0a0ad2;padding-left:4.5px;letter-spacing:0.05px"><i>Comando:</i> line</div>
<div class="a" style="left:72px;top:771px;width:1082px;height:27px;background:#ececec"></div>
<div class="a" style="left:73px;top:776px;font-size:13px;line-height:18px;color:#111;letter-spacing:0.1px">Comando:</div>
<div class="a" style="left:138px;top:776px;width:989px;height:18px;background:#fff"></div>
<div class="a" style="left:1127px;top:773px;width:26px;height:24px;background:#f6f6f6;border:1px solid #bcbcbc"></div>
<div class="a" style="left:1133px;top:780px;width:14px;height:10px;background:#fff;border:1px solid #111;border-top:3px solid #111"></div>
<div id="status" class="a" style="top:798px;box-shadow:inset 0 1px #e6e6e6">
<div class="st" style="left:2.5px;top:8.6px">30,19.8</div>
<div class="st" style="left:2.5px;top:28.5px;letter-spacing:0.45px">@-90,-40.2</div>
<div class="a" style="left:253px;top:4px;width:1px;height:40px;background:#6f6f6f"></div>
<div class="st" style="left:256.5px;top:8.6px;letter-spacing:0.45px">35.945&lt;33°</div>
<div class="st" style="left:256.5px;top:28.5px;letter-spacing:0.45px">@98.57&lt;204°</div>
<div class="a" style="left:506.5px;top:20.5px;width:6px;height:6px;border-radius:3px;background:#c6c6c6"></div>
<div class="a" style="left:940.5px;top:20.5px;width:6px;height:6px;border-radius:3px;background:#c6c6c6"></div>
<div class="a" style="left:1269.5px;top:20.5px;width:6px;height:6px;border-radius:3px;background:#c6c6c6"></div>
<div class="st" style="left:399px;width:300px;text-align:right;top:12.5px;letter-spacing:0.32px">Seleccionar entidad o región</div>
<div class="st" style="left:399px;width:300px;text-align:right;top:23.5px;letter-spacing:0.32px">Mover entidad o referencia</div>
<div class="st" style="left:949px;top:12.5px;letter-spacing:0.32px">Las entidades seleccionadas:</div>
<div class="st" style="left:949px;top:23.5px;letter-spacing:0.32px">1 Línea en capa "0".</div>
<svg style="left:716px;top:7px" width="20" height="32" viewBox="716 805 20 32">
<path d="M717.6 815Q717.6 806.4 726.2 806.4Q734.8 806.4 734.8 815V827Q734.8 835.4 726.2 835.4Q717.6 835.4 717.6 827Z" fill="#fff" stroke="#333" stroke-width="0.9"/>
<path d="M717.6 819.6Q726.2 817.4 734.8 819.6M726.2 806.4V808.4M726.2 815.4V818.4" fill="none" stroke="#333" stroke-width="0.8"/>
<rect x="724.8" y="808.4" width="2.8" height="7" rx="1.4" fill="#fff" stroke="#333" stroke-width="0.8"/>
</svg>
</div>
<div id="right" class="a">
<div class="a" style="left:0;top:0;width:298px;height:22px;background:linear-gradient(#ebebeb,#e2e2e2 50%,#d6d6d6);border-bottom:1px solid #c0c0c0;text-align:center;font-size:11px;line-height:22px;color:#222;padding-left:34px;letter-spacing:0.25px">Lista de capas</div>
<svg style="left:0;top:0" width="298" height="70" viewBox="1155 108 298 70">
<defs><linearGradient id="gBtn" x1="0" y1="0" x2="0" y2="1"><stop offset="0" stop-color="#e7e7e7"/><stop offset="0.5" stop-color="#eeeeee"/><stop offset="1" stop-color="#f7f7f7"/></linearGradient>
<g id="eye"><path d="M-7.4 0.2Q-3.6 -5 0.4 -5Q4.6 -5 7.4 0.2Q4 5 0 5Q-4 5 -7.4 0.2Z"/><path d="M-4.6 0.6Q-2.4 3.6 0.2 3.6Q2.8 3.6 4.8 0.6Q2.6 -1.6 0 -1.6Q-2.6 -1.6 -4.6 0.6Z" fill="#fff"/><circle cx="0.2" cy="0.2" r="2.7"/><circle cx="-0.8" cy="-0.9" r="0.9" fill="#fff"/></g>
<g id="pen"><path d="M-6.6 7L-5.2 2.6L5 -7L7.6 -4.4L-2.4 5.4Z" fill="#f0a020" stroke="#9a5a10" stroke-width="0.5" stroke-linejoin="round"/><path d="M-4.4 2.2L5.6 -7" stroke="#ffd070" stroke-width="1"/><path d="M3.8 -5.8L5 -7L7.6 -4.4L6.4 -3.2Z" fill="#e0281e"/><path d="M-6.6 7L-6 5L-4.8 6.2Z" fill="#222"/></g>
</defs>
<circle cx="1164" cy="118" r="7" fill="#626262"/>
<path d="M1161.4 115.4L1166.6 120.6M1166.6 115.4L1161.4 120.6" stroke="#fff" stroke-width="1.9" stroke-linecap="round"/>
<circle cx="1182" cy="118" r="7" fill="#626262"/>
<rect x="1180.6" y="114.4" width="5" height="4.4" fill="none" stroke="#fff" stroke-width="1.1"/>
<rect x="1178.4" y="117" width="5" height="4.4" fill="#626262" stroke="#fff" stroke-width="1.1"/>
<g fill="url(#gBtn)" stroke="#b4b4b4" stroke-width="1"><rect x="1155.5" y="130.5" width="59" height="25"/><rect x="1215.5" y="130.5" width="59" height="25"/><rect x="1275.5" y="130.5" width="59" height="25"/><rect x="1335.5" y="130.5" width="59" height="25"/><rect x="1395.5" y="130.5" width="58" height="25"/></g>
<rect x="1155" y="155.5" width="298" height="1.5" fill="#c9c9c9"/>
<use href="#eye" x="1185" y="143" fill="#000"/>
<use href="#eye" x="1245" y="143" fill="#9c9c9c"/>
<path d="M1299 143H1311M1305 137V149" stroke="#e8141c" stroke-width="3"/>
<path d="M1359 143H1371" stroke="#e8141c" stroke-width="3"/>
<use href="#pen" x="1425" y="143"/>
<rect x="1161.5" y="163.5" width="15" height="8" fill="#fff" stroke="#000" stroke-width="1"/>
<g transform="translate(1401 166.6) scale(0.92)"><use href="#pen"/></g>
<use href="#eye" x="1423" y="166.6" fill="#000"/>
<path d="M1442.5 166.4V163.8Q1442.5 161.2 1445.2 161.2Q1447.9 161.2 1447.9 163.8V166.4" fill="none" stroke="#cdcdcd" stroke-width="1.3"/>
<rect x="1440.5" y="166" width="9.5" height="7.6" rx="0.8" fill="#acacac"/>
</svg>
<div class="a" style="left:27.5px;top:50.8px;font-size:14px;line-height:16px;color:#111">0</div>
</div>
<div id="rtb" class="a">
<div class="a" style="left:8px;top:8px;width:28px;height:2px;background-image:linear-gradient(90deg,#a9a9a9 2px,transparent 2px);background-size:6.2px 2px"></div>
<div class="act" style="left:2px;top:12.5px;width:43px;height:42px"></div>
<div class="act" style="left:2px;top:309px;width:43px;height:42px"></div>
<div class="a" style="left:5px;top:153px;width:41px;height:1px;background-image:linear-gradient(90deg,#6a6a6a 1px,transparent 1px);background-size:3px 1px"></div>
<div class="a" style="left:5px;top:300px;width:41px;height:1px;background-image:linear-gradient(90deg,#6a6a6a 1px,transparent 1px);background-size:3px 1px"></div>
<svg style="left:0;top:0" width="46" height="690" viewBox="1454 108 46 690">
<defs><g id="win"><rect x="0.5" y="0.5" width="27" height="27" fill="#fff" stroke="#222" stroke-width="1"/><rect x="0.5" y="0.5" width="27" height="4.4" fill="#000"/><rect x="1.4" y="1.2" width="2.6" height="2.8" fill="#fff"/></g></defs>
<use href="#win" x="1463" y="127"/>
<path d="M1470.4 136.6L1476.4 134V145.2L1470.4 148Z" fill="#b8b8b8" stroke="#555" stroke-width="0.7"/>
<path d="M1472.8 135.8L1478.8 133.2V144.4L1472.8 147.2Z" fill="#c8c8c8" stroke="#555" stroke-width="0.7"/>
<path d="M1475.4 135L1483.4 132V144L1475.4 147Z" fill="#fff" stroke="#444" stroke-width="0.7"/>
<path d="M1477.4 143.6L1481.4 136.6V142.6Z" fill="none" stroke="#e02020" stroke-width="0.8"/>
<use href="#win" x="1463" y="174"/>
<rect x="1470" y="182.6" width="9.6" height="7.4" fill="#fbefc4" stroke="#555" stroke-width="0.8"/>
<circle cx="1479.4" cy="191.4" r="4.4" fill="#fbefc4" fill-opacity="0.85" stroke="#555" stroke-width="0.8"/>
<use href="#win" x="1463" y="220"/>
<rect x="1468.6" y="230.4" width="16.8" height="11" rx="2" fill="#efefef" stroke="#b9c9e4" stroke-width="1"/>
<use href="#win" x="1463" y="276"/>
<g fill="#111"><rect x="1466" y="284.4" width="4.4" height="3"/><rect x="1466" y="290.4" width="4.4" height="3"/><rect x="1466" y="296.4" width="4.4" height="3"/></g>
<g fill="#fff" stroke="#555" stroke-width="0.7"><rect x="1472.6" y="284.6" width="14" height="2.8"/><rect x="1472.6" y="290.6" width="14" height="2.8"/><rect x="1472.6" y="296.6" width="14" height="2.8"/></g>
<use href="#win" x="1463" y="322"/>
<path d="M1469.6 331.2Q1477 328.6 1484.4 331.2Q1484.4 332.8 1482 334L1478.6 339V345.6L1475.6 343.6V339L1472 334Q1469.6 332.8 1469.6 331.2Z" fill="#8c8c8c" stroke="#5a5a5a" stroke-width="0.7"/>
<ellipse cx="1477" cy="331.4" rx="7.2" ry="1.6" fill="#c9c9c9" stroke="#5a5a5a" stroke-width="0.6"/>
<use href="#win" x="1463" y="368"/>
<path d="M1469 384H1486" stroke="#e88" stroke-width="0.8" stroke-dasharray="2.4 1"/>
<path d="M1469.6 378.2L1474.6 381V387L1469.6 389.8Z" fill="#fff" stroke="#444" stroke-width="0.8"/>
<rect x="1474.6" y="380.4" width="9.4" height="7.2" rx="1" fill="#9a9a9a" stroke="#555" stroke-width="0.7"/>
<path d="M1476.4 380.6V387.4M1478.4 380.6V387.4M1480.4 380.6V387.4M1482.4 380.6V387.4" stroke="#666" stroke-width="0.6"/>
<use href="#win" x="1463" y="424"/>
<g stroke="#555" stroke-width="0.8"><path d="M1465.6 431.6H1476M1465.6 434.8H1476.6M1465.6 438H1479M1465.6 441.2H1479"/></g>
<path d="M1464 446.4H1490" stroke="#222" stroke-width="0.7"/>
<path d="M1466 449H1468M1472 449H1487" stroke="#444" stroke-width="1.2"/>
<use href="#win" x="1463" y="470"/>
<rect x="1469.6" y="478.8" width="14.8" height="16" rx="1" fill="#c08a3c" stroke="#8a5f22" stroke-width="0.7"/>
<rect x="1471.4" y="480.8" width="11.2" height="12.4" fill="#f4f4f4"/>
<rect x="1474" y="477.4" width="6" height="3" rx="0.8" fill="#a8a8a0" stroke="#777" stroke-width="0.5"/>
<path d="M1473 484.4H1481M1473 486.6H1481M1473 488.8H1479" stroke="#b9b9b9" stroke-width="0.8"/>
<path d="M1479.8 493.2H1482.6V490.4Z" fill="#8fb3e0"/>
</svg>
</div>
</div></body></html>
